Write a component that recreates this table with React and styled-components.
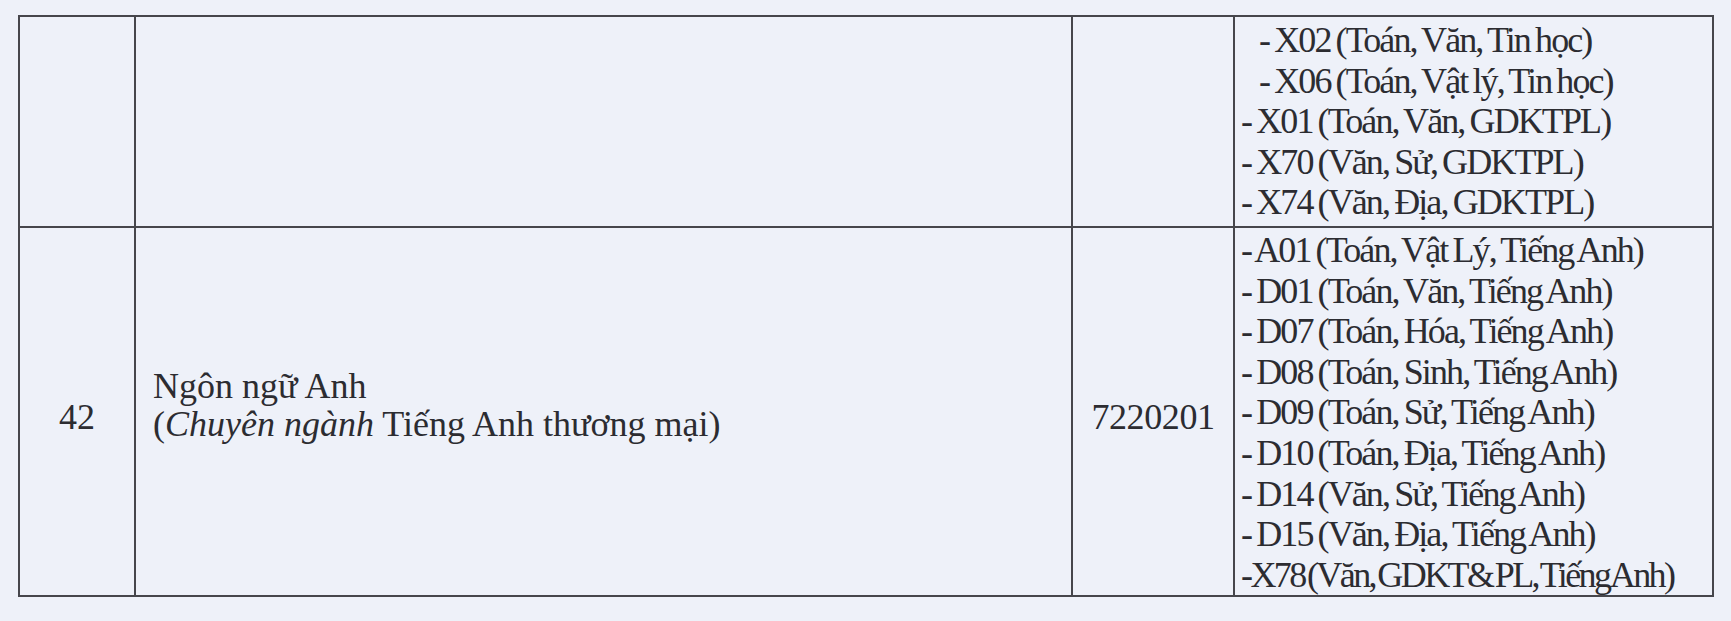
import React from "react";
import styled, { createGlobalStyle } from "styled-components";

const GlobalStyle = createGlobalStyle`
  html, body {
    margin: 0;
    padding: 0;
    background: #eef1f9;
  }
  body {
    font-family: "Liberation Serif", "Times New Roman", serif;
    color: #2c2c31;
  }
`;

const Page = styled.div`
  width: 1731px;
  height: 621px;
  overflow: hidden;
  box-sizing: border-box;
  padding: 15px 0 0 18px;
`;

const Table = styled.table`
  border-collapse: collapse;
  table-layout: fixed;
  width: 1694px;
  font-size: 36px;
  line-height: 40px;
`;

const Row = styled.tr`
  height: ${(p) => p.$height}px;
`;

const Cell = styled.td`
  border: 2px solid #46464c;
  padding: 0 12px;
  vertical-align: middle;
  text-align: ${(p) => p.$align || "left"};
`;

const NumberCell = styled(Cell)`
  padding-top: 10px;
`;

const NameCell = styled(Cell)`
  padding: 0 12px 14px 17px;
  line-height: 38px;
`;

const CodeCell = styled(Cell)`
  padding: 10px 8px 0;
  letter-spacing: -0.4px;
`;

const ComboCell = styled(Cell)`
  padding: ${(p) => p.$top}px 4px 0 6px;
  vertical-align: top;
  line-height: 40.6px;
`;

const Combo = styled.div`
  white-space: pre;
  letter-spacing: ${(p) => (p.$tight ? "-2.6px" : "-1.9px")};
  word-spacing: ${(p) => (p.$tight ? "-4px" : "-2px")};
  padding-left: ${(p) => (p.$indent ? 18 : 0)}px;
`;

const firstCombos = [
  { text: "- X02 (Toán, Văn, Tin học)", indent: true },
  { text: "- X06 (Toán, Vật lý, Tin học)", indent: true },
  { text: "- X01 (Toán, Văn, GDKTPL)" },
  { text: "- X70 (Văn, Sử, GDKTPL)" },
  { text: "- X74 (Văn, Địa, GDKTPL)" },
];

const englishCombos = [
  { text: "- A01 (Toán, Vật Lý, Tiếng Anh)" },
  { text: "- D01 (Toán, Văn, Tiếng Anh)" },
  { text: "- D07 (Toán, Hóa, Tiếng Anh)" },
  { text: "- D08 (Toán, Sinh, Tiếng Anh)" },
  { text: "- D09 (Toán, Sử, Tiếng Anh)" },
  { text: "- D10 (Toán, Địa, Tiếng Anh)" },
  { text: "- D14 (Văn, Sử, Tiếng Anh)" },
  { text: "- D15 (Văn, Địa, Tiếng Anh)" },
  { text: "-X78 (Văn, GDKT& PL, Tiếng Anh)", tight: true },
];

function ComboList({ items }) {
  return items.map((c) => (
    <Combo key={c.text} $indent={c.indent} $tight={c.tight}>
      {c.text}
    </Combo>
  ));
}

export default function App() {
  return (
    <Page>
      <GlobalStyle />
      <Table>
        <colgroup>
          <col style={{ width: 116 }} />
          <col style={{ width: 937 }} />
          <col style={{ width: 162 }} />
          <col style={{ width: 479 }} />
        </colgroup>
        <tbody>
          <Row $height={211}>
            <Cell />
            <Cell />
            <Cell />
            <ComboCell $top={3}>
              <ComboList items={firstCombos} />
            </ComboCell>
          </Row>
          <Row $height={369}>
            <NumberCell $align="center">42</NumberCell>
            <NameCell>
              Ngôn ngữ Anh
              <br />
              (<i>Chuyên ngành</i> Tiếng Anh thương mại)
            </NameCell>
            <CodeCell $align="center">7220201</CodeCell>
            <ComboCell $top={2}>
              <ComboList items={englishCombos} />
            </ComboCell>
          </Row>
        </tbody>
      </Table>
    </Page>
  );
}
